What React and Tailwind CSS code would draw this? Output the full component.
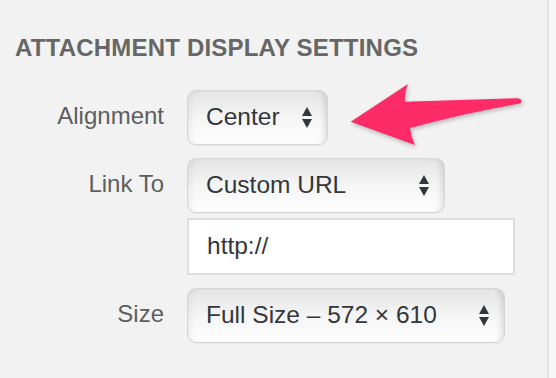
import React from 'react';

const font = { fontFamily: '"Liberation Sans", Arial, sans-serif' };

const Updown = () => (
  <svg width="10" height="21" viewBox="0 0 10 21" className="shrink-0">
    <polygon points="0,9 5,0 10,9" fill="#33373b" />
    <polygon points="0,12 10,12 5,21" fill="#33373b" />
  </svg>
);

const Select = ({ value, width }) => (
  <div
    className={`${width} h-[55px] flex items-center justify-between pl-[18px] pr-[15px] rounded-[9px] border border-[#d5d5d5] bg-linear-to-b from-[#e4e4e4] via-[#f5f5f5] to-[#fefefe] shadow-[inset_-7px_0_7px_-5px_rgba(0,0,0,0.14),inset_7px_0_7px_-5px_rgba(0,0,0,0.07),0_1px_0_rgba(0,0,0,0.04)]`}
  >
    <span className="text-[24.5px] leading-none text-[#32373c] whitespace-nowrap">{value}</span>
    <Updown />
  </div>
);

const Label = ({ children }) => (
  <div className="w-[164px] shrink-0 text-right text-[24px] leading-none text-[#5e5e5e] pb-[4px]">
    {children}
  </div>
);

const Arrow = () => (
  <svg
    width="190"
    height="85"
    viewBox="0 0 190 85"
    className="absolute left-[340px] top-[75px] drop-shadow-[1px_2px_2px_rgba(0,0,0,0.25)]"
  >
    <path
      d="M10.7 46.7 L68 9 Q64 18 65 26.7 Q120 25 177 23.2 Q181.5 23.5 181.5 26 Q181.5 28.5 177 29 Q125 38 70 53 Q71 62 75 70 Z"
      fill="#fd2b68"
    />
  </svg>
);

export default function App() {
  return (
    <div className="w-[556px] h-[378px] flex bg-[#f6f6f6] overflow-hidden" style={font}>
      <div className="relative w-[549px] h-full shrink-0 bg-[#f2f2f2] border-r-2 border-[#e3e3e3]">
        <h2 className="pl-[15px] pt-[34px] text-[24px] leading-[28px] font-bold text-[#666666] tracking-[0.2px]">
          ATTACHMENT DISPLAY SETTINGS
        </h2>

        <div className="mt-[28px] flex flex-col">
          <div className="flex items-center">
            <Label>Alignment</Label>
            <div className="ml-[23px]">
              <Select value="Center" width="w-[141px]" />
            </div>
          </div>

          <div className="mt-[13px] flex items-start">
            <div className="h-[55px] flex items-center">
              <Label>Link To</Label>
            </div>
            <div className="ml-[23px] flex flex-col gap-[5px]">
              <Select value="Custom URL" width="w-[258px]" />
              <div className="w-[328px] h-[57px] flex items-center pl-[18px] bg-white border-2 border-[#dedede] text-[24.5px] leading-none text-[#32373c]">
                http://
              </div>
            </div>
          </div>

          <div className="mt-[13px] flex items-center">
            <Label>Size</Label>
            <div className="ml-[23px]">
              <Select value="Full Size – 572 × 610" width="w-[318px]" />
            </div>
          </div>
        </div>

        <Arrow />
      </div>
    </div>
  );
}
